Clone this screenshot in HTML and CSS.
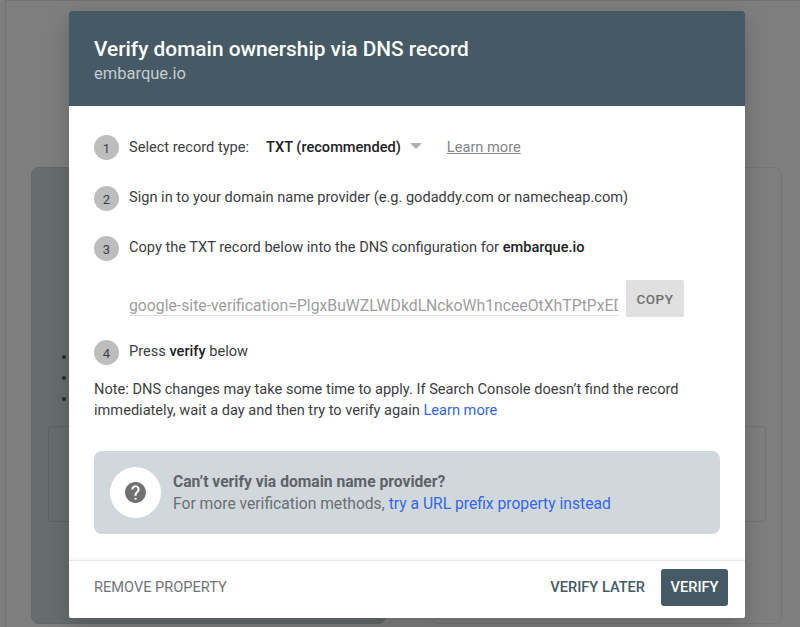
FILE: index.html
```html
<!DOCTYPE html>
<html lang="en-us">
<head>
  <meta charset="utf-8" />
  <title>Verify domain ownership</title>
  <link rel="stylesheet" href="styles.css">
</head>
<body>
  <div class="backdrop">
    <div class="panel">
      <section class="card card-dark">
        <ul class="card-list">
          <li></li>
          <li></li>
          <li></li>
        </ul>
        <div class="inner-card"></div>
      </section>
      <section class="card">
        <div class="inner-card"></div>
      </section>
    </div>
  </div>

  <div class="dialog">
    <header class="dialog-header">
      <h1>Verify domain ownership via DNS record</h1>
      <p>embarque.io</p>
    </header>

    <main class="dialog-body">
      <div class="step step-1">
        <span class="step-num">1</span>
        <span>Select record type:</span>
        <span class="record-type">TXT (recommended)</span>
        <span class="caret"></span>
        <a class="learn-grey" href="#">Learn more</a>
      </div>
      <div class="step step-2">
        <span class="step-num">2</span>
        <span>Sign in to your domain name provider (e.g. godaddy.com or namecheap.com)</span>
      </div>
      <div class="step step-3">
        <span class="step-num">3</span>
        <span>Copy the TXT record below into the DNS configuration for <b>embarque.io</b></span>
      </div>
      <div class="record-row">
        <input class="record-input" type="text" readonly value="google-site-verification=PlgxBuWZLWDkdLNckoWh1nceeOtXhTPtPxEDs0mQk">
        <button class="copy-btn">COPY</button>
      </div>
      <div class="step step-4">
        <span class="step-num">4</span>
        <span>Press <b>verify</b> below</span>
      </div>
      <p class="note">Note: DNS changes may take some time to apply. If Search Console doesn’t find the record immediately, wait a day and then try to verify again <a href="#">Learn more</a></p>

      <div class="callout">
        <div class="callout-icon">
          <svg viewBox="0 0 24 24" width="25" height="25">
            <path fill="#707070" d="M12 2C6.48 2 2 6.48 2 12s4.48 10 10 10 10-4.48 10-10S17.52 2 12 2zm1 17h-2v-2h2v2zm2.07-7.75l-.9.92C13.45 12.9 13 13.5 13 15h-2v-.5c0-1.1.45-2.1 1.17-2.83l1.24-1.26c.37-.36.59-.86.59-1.41 0-1.1-.9-2-2-2s-2 .9-2 2H8c0-2.21 1.79-4 4-4s4 1.79 4 4c0 .88-.36 1.68-.93 2.25z"/>
          </svg>
        </div>
        <div class="callout-text">
          <b>Can’t verify via domain name provider?</b>
          <span>For more verification methods, <a href="#">try a URL prefix property instead</a></span>
        </div>
      </div>
    </main>

    <footer class="dialog-footer">
      <button class="btn btn-grey">REMOVE PROPERTY</button>
      <div class="footer-right">
        <button class="btn btn-later">VERIFY LATER</button>
        <button class="btn btn-verify">VERIFY</button>
      </div>
    </footer>
  </div>
</body>
</html>
```

FILE: styles.css
```css
html, body {
  height: 100%;
  margin: 0;
  overflow: hidden;
  font-family: Roboto, "Liberation Sans", sans-serif;
  background-color: #7e7e7e;
}

/* page behind the dialog */
.backdrop {
  height: 627px;
  box-sizing: border-box;
  margin-left: 5px;
  padding: 166px 18px 3px 25px;
  border-left: 1px solid #727272;
  border-top: 1px solid #727272;
}

.panel {
  height: 100%;
  display: grid;
  grid-template-columns: 355px 1fr;
  gap: 44px;
}

.card {
  border: 1px solid #757575;
  border-radius: 8px;
  padding: 258px 15px 0;
  box-sizing: border-box;
}

.card-dark {
  position: relative;
  background-color: #666d6c;
  border-color: #62686a;
  padding-left: 16px;
}

.card-list {
  position: absolute;
  left: 30px;
  top: 187px;
  margin: 0;
  padding: 0;
  list-style: none;
}

.card-list li {
  width: 4px;
  height: 4px;
  border-radius: 50%;
  background-color: #2b2b2b;
  margin-bottom: 17px;
}

.inner-card {
  height: 94px;
  border: 1px solid #727272;
  border-radius: 4px;
}

.card-dark .inner-card {
  border-color: #5b6161;
}

/* dialog */
.dialog {
  position: absolute;
  left: 69px;
  top: 11px;
  width: 676px;
  height: 607px;
  display: flex;
  flex-direction: column;
  background-color: #fff;
  border-radius: 2px;
  box-shadow: 0 8px 24px rgba(0, 0, 0, 0.2);
}

.dialog-header {
  height: 95px;
  box-sizing: border-box;
  padding: 25px 25px 0;
  background-color: #455a64;
  border-radius: 2px 2px 0 0;
  color: #fff;
}

.dialog-header h1 {
  margin: 0;
  font-size: 20.85px;
  line-height: 26px;
  font-weight: 500;
}

.dialog-header p {
  margin: 0;
  font-size: 16.5px;
  line-height: 24px;
  color: rgba(255, 255, 255, 0.7);
}

.dialog-body {
  flex: 1;
  padding: 28px 25px 0;
  font-size: 14.6px;
  color: #3c4043;
  box-shadow: inset 0 -5px 5px -5px rgba(0, 0, 0, 0.08);
}

.dialog-body b {
  font-weight: 500;
  color: #202124;
}

.step {
  display: flex;
  align-items: flex-start;
  line-height: 24px;
}

.step-1 {
  line-height: 26px;
}

.step-num {
  width: 25px;
  height: 25px;
  margin-right: 10px;
  flex-shrink: 0;
  margin-top: 1px;
  border-radius: 50%;
  background-color: #bdbdbd;
  color: #3c4043;
  font-size: 13px;
  line-height: 27px;
  text-align: center;
}

.step-2 {
  margin-top: 25px;
}

.step-3 {
  margin-top: 24px;
}

.record-type {
  margin-left: 17px;
  font-weight: 500;
  color: #202124;
}

.caret {
  width: 0;
  height: 0;
  margin: 9px 0 0 9px;
  border-left: 6px solid transparent;
  border-right: 6px solid transparent;
  border-top: 6px solid #b0b0b0;
}

.learn-grey {
  margin-left: 25px;
  color: #80868b;
  text-decoration: underline;
}

.record-row {
  display: flex;
  align-items: flex-start;
  margin: 19px 0 0 35px;
}

.record-input {
  width: 489px;
  height: 36px;
  margin-right: 8px;
  padding: 15px 0 0;
  box-sizing: border-box;
  border: none;
  border-bottom: 1px solid #e0e0e0;
  outline: none;
  font-family: inherit;
  font-size: 15.75px;
  color: #9e9e9e;
}

.copy-btn {
  width: 58px;
  height: 37px;
  padding: 0;
  border: none;
  border-radius: 2px;
  background-color: #e0e0e0;
  color: #6f6f6f;
  font-family: inherit;
  font-size: 13.5px;
  font-weight: 500;
  letter-spacing: 0.5px;
}

.step-4 {
  margin-top: 22px;
}

.note {
  margin: 14px 0 0;
  line-height: 20.5px;
}

.note a, .callout a {
  color: #3367e8;
  text-decoration: none;
}

.callout {
  display: flex;
  align-items: center;
  height: 83px;
  margin-top: 31px;
  padding: 0 16px;
  box-sizing: border-box;
  background-color: #d0d8dc;
  border-radius: 8px;
}

.callout-icon {
  width: 51px;
  height: 51px;
  margin-right: 12px;
  display: flex;
  align-items: center;
  justify-content: center;
  border-radius: 50%;
  background-color: #fff;
}

.callout-text {
  display: flex;
  flex-direction: column;
  line-height: 22px;
  font-size: 15.65px;
  color: #6b6f72;
}

.callout-text b {
  color: #5f6368;
  font-weight: 700;
}

.dialog-footer {
  height: 58px;
  display: flex;
  align-items: center;
  justify-content: space-between;
  padding: 0 17px 5px 25px;
  border-top: 1px solid #e6e6e6;
  box-sizing: border-box;
}

.footer-right {
  display: flex;
  align-items: center;
  gap: 16px;
}

.btn {
  padding: 0;
  border: none;
  background: none;
  font-family: inherit;
  font-size: 14.6px;
  font-weight: 500;
}

.btn-grey {
  color: #70757a;
  font-weight: 400;
}

.btn-later {
  color: #455a64;
}

.btn-verify {
  width: 67px;
  height: 37px;
  border-radius: 3px;
  background-color: #455a64;
  color: #fff;
}
```
